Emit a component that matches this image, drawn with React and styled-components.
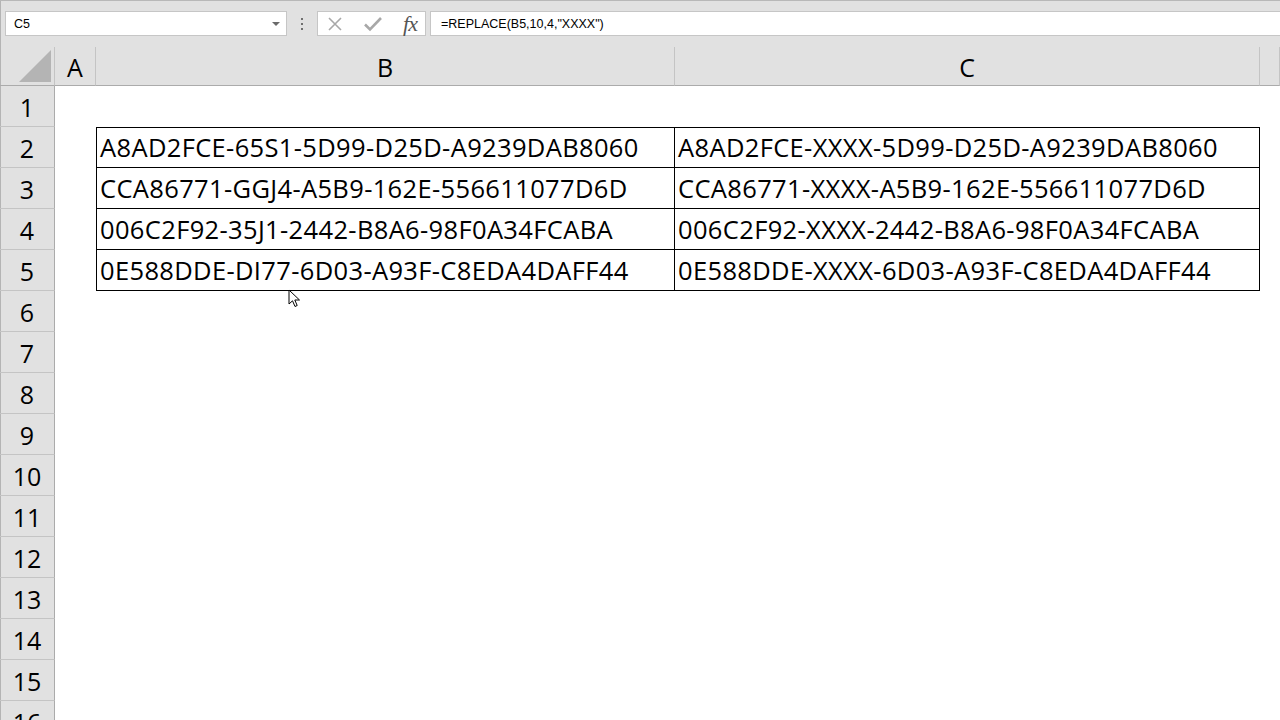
import React from 'react';
import styled, { createGlobalStyle } from 'styled-components';

const GlobalStyle = createGlobalStyle`
  html, body {
    margin: 0;
    padding: 0;
    overflow: hidden;
    background: #e1e1e1;
  }
  * {
    box-sizing: border-box;
  }
`;

const Window = styled.div`
  position: relative;
  width: 1280px;
  height: 720px;
  overflow: hidden;
  background: #e1e1e1;
  box-shadow: inset 1px 0 0 #b4b4b4;
  font-family: "Open Sans", "Noto Sans", sans-serif;
  color: #000;
`;

const FormulaBar = styled.div`
  height: 47px;
  border-top: 1px solid #b8b8b8;
  padding: 10px 0 0 5px;
  display: flex;
  align-items: flex-start;
`;

const NameBox = styled.div`
  width: 282px;
  height: 25px;
  background: #fff;
  border: 1px solid #c6c6c6;
  display: flex;
  align-items: center;
  justify-content: space-between;
  padding: 0 6px 0 8px;
  font-size: 12.5px;
  font-family: "Liberation Sans", "Noto Sans", sans-serif;
`;

const Caret = styled.span`
  width: 0;
  height: 0;
  border-left: 4px solid transparent;
  border-right: 4px solid transparent;
  border-top: 4px solid #6a6a6a;
`;

const Grip = styled.div`
  width: 30px;
  height: 25px;
  display: flex;
  flex-direction: column;
  align-items: center;
  justify-content: center;
  gap: 3px;
`;

const Dot = styled.span`
  width: 2px;
  height: 2px;
  background: #6f6f6f;
`;

const ButtonBox = styled.div`
  width: 109px;
  height: 25px;
  background: #fff;
  border: 1px solid #c6c6c6;
  display: flex;
  align-items: center;
  padding: 0 8px 0 9px;
  justify-content: space-between;
`;

const Fx = styled.span`
  font-family: "Liberation Serif", "DejaVu Serif", serif;
  font-style: italic;
  font-size: 22px;
  color: #555;
  line-height: 1;
  letter-spacing: -1px;
`;

const FormulaInput = styled.div`
  flex: 1;
  margin-left: 4px;
  height: 25px;
  background: #fff;
  border: 1px solid #c6c6c6;
  border-right: none;
  display: flex;
  align-items: center;
  padding-left: 10px;
  font-size: 12.5px;
  font-family: "Liberation Sans", "Noto Sans", sans-serif;
`;

const Sheet = styled.div`
  display: grid;
  grid-template-columns: 55px 41px 579px 585px 20px;
  grid-template-rows: 39px;
  grid-auto-rows: 41px;
`;

const Corner = styled.div`
  border-right: 1px solid #c4c4c4;
  border-bottom: 1px solid #ababab;
  display: flex;
  align-items: flex-end;
  justify-content: flex-end;
  padding: 0 3px 3px 0;
`;

const ColHeader = styled.div`
  border-right: 1px solid #c4c4c4;
  border-bottom: 1px solid #ababab;
  display: flex;
  align-items: center;
  justify-content: center;
  font-size: 25px;
  padding-top: 2px;
`;

const RowHeader = styled.div`
  border-right: 1px solid #ababab;
  border-bottom: 1px solid #c4c4c4;
  box-shadow: inset 1px 0 0 #b4b4b4;
  display: flex;
  align-items: center;
  justify-content: center;
  font-size: 25px;
  padding-top: 2px;
`;

const Cell = styled.div`
  background: #fff;
  display: flex;
  align-items: flex-end;
  padding: 0 0 3px 3px;
  font-size: 25.5px;
  letter-spacing: 0.35px;
  white-space: nowrap;
  overflow: hidden;
  border-right: ${(p) => (p.$boxed ? '1px solid #000' : 'none')};
  border-bottom: ${(p) => (p.$boxed ? '1px solid #000' : 'none')};
  border-top: ${(p) => (p.$top ? '1px solid #000' : 'none')};
  border-left: ${(p) => (p.$left ? '1px solid #000' : 'none')};
`;

const Pointer = styled.svg`
  position: absolute;
  left: 288px;
  top: 289px;
`;

const data = [
  ['A8AD2FCE-65S1-5D99-D25D-A9239DAB8060', 'A8AD2FCE-XXXX-5D99-D25D-A9239DAB8060'],
  ['CCA86771-GGJ4-A5B9-162E-556611077D6D', 'CCA86771-XXXX-A5B9-162E-556611077D6D'],
  ['006C2F92-35J1-2442-B8A6-98F0A34FCABA', '006C2F92-XXXX-2442-B8A6-98F0A34FCABA'],
  ['0E588DDE-DI77-6D03-A93F-C8EDA4DAFF44', '0E588DDE-XXXX-6D03-A93F-C8EDA4DAFF44'],
];

const rows = Array.from({ length: 16 }, (_, i) => i + 1);

export default function App() {
  return (
    <Window>
      <GlobalStyle />
      <FormulaBar>
        <NameBox>
          <span>C5</span>
          <Caret />
        </NameBox>
        <Grip>
          <Dot />
          <Dot />
          <Dot />
        </Grip>
        <ButtonBox>
          <svg width="16" height="16" viewBox="0 0 16 16">
            <path d="M2 2 L14 14 M14 2 L2 14" stroke="#a8a8a8" strokeWidth="1.6" fill="none" />
          </svg>
          <svg width="20" height="16" viewBox="0 0 20 16">
            <path d="M2 8.5 L7 13.5 L18 2" stroke="#a8a8a8" strokeWidth="2.6" fill="none" />
          </svg>
          <Fx>fx</Fx>
        </ButtonBox>
        <FormulaInput>=REPLACE(B5,10,4,"XXXX")</FormulaInput>
      </FormulaBar>

      <Sheet>
        <Corner>
          <svg width="32" height="32" viewBox="0 0 32 32">
            <polygon points="32,0 32,32 0,32" fill="#b4b4b4" />
          </svg>
        </Corner>
        <ColHeader>A</ColHeader>
        <ColHeader>B</ColHeader>
        <ColHeader>C</ColHeader>
        <ColHeader />

        {rows.map((r) => {
          const item = data[r - 2];
          const boxed = Boolean(item);
          return (
            <React.Fragment key={r}>
              <RowHeader>{r}</RowHeader>
              <Cell />
              <Cell $boxed={boxed} $left={boxed} $top={r === 2}>
                {item ? item[0] : ''}
              </Cell>
              <Cell $boxed={boxed} $top={r === 2}>
                {item ? item[1] : ''}
              </Cell>
              <Cell />
            </React.Fragment>
          );
        })}
      </Sheet>

      <Pointer width="13" height="20" viewBox="0 0 13 20">
        <path
          d="M1 1 L1 15 L4.5 11.8 L7 17.5 L9.2 16.5 L6.8 11 L11.5 11 Z"
          fill="#fff"
          stroke="#000"
          strokeWidth="1"
          strokeLinejoin="round"
        />
      </Pointer>
    </Window>
  );
}
